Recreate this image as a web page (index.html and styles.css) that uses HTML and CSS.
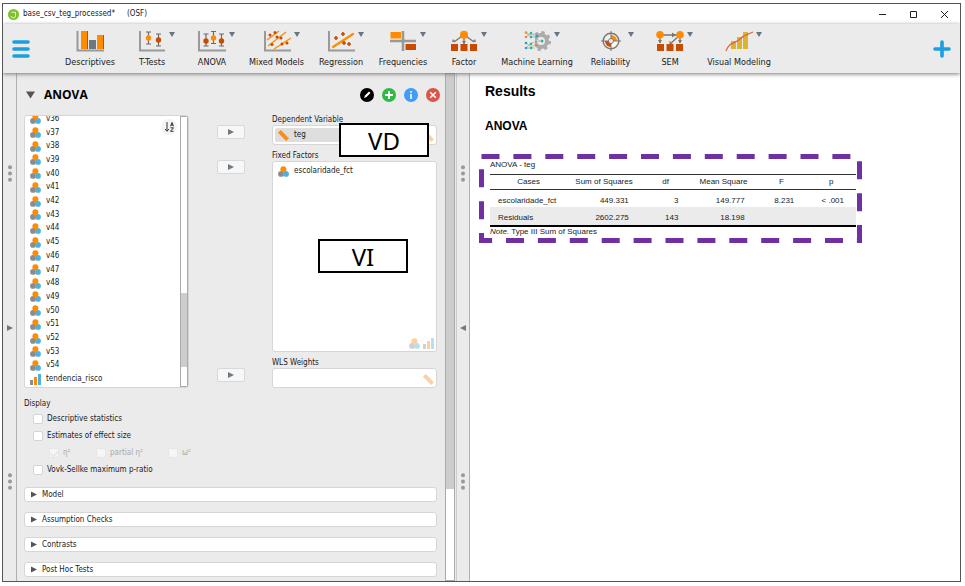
FILE: index.html
```html
<!DOCTYPE html>
<html lang="en">
<head>
<meta charset="utf-8">
<title>base_csv_teg_processed* (OSF)</title>
<link rel="stylesheet" href="styles.css">
</head>
<body>
<svg class="defs" aria-hidden="true">
  <symbol id="nominal" viewBox="0 0 11 11"><circle cx="3" cy="7.9" r="2.9" fill="#8c8c8c"/><circle cx="8" cy="7.9" r="2.9" fill="#4fb0de"/><circle cx="5.4" cy="3.2" r="3" fill="#ff8c00"/></symbol>
  <symbol id="ordinal" viewBox="0 0 11 11"><path d="M0 6h3v5H0z" fill="#8c8c8c"/><path d="M4 3h3v8H4z" fill="#ff8c00"/><path d="M8 0h3v11H8z" fill="#4fb0de"/></symbol>
  <symbol id="scale" viewBox="0 0 11 11"><path d="M0 2.8 2.8 0 11 8.200 8.200 11z" fill="#f58a1f"/><path d="M4 1.400 3 2.400M6 3.400 5 4.400M8 5.400 7 6.400M9.800 7.200 8.900 8.200" stroke="#ffc58a" stroke-width=".6"/></symbol>
  <symbol id="play" viewBox="0 0 6 6"><path d="M0 0 6 3 0 6z" fill="currentColor"/></symbol>
  <symbol id="dots" viewBox="0 0 4 17"><circle cx="2" cy="2.200" r="2"/><circle cx="2" cy="8.500" r="2"/><circle cx="2" cy="14.800" r="2"/></symbol>
</svg>
<div class="window">
  <header class="titlebar">
    <svg class="logo" viewBox="0 0 11 11"><circle cx="5.500" cy="5.500" r="5.500" fill="#7fc02f"/><path d="M3.500 3.200h4v3a2 2 0 0 1-4.500.8" stroke="#e6f5d0" fill="none"/></svg>
    <span>base_csv_teg_processed*</span><span class="osf">(OSF)</span>
    <div class="winbtns">
      <button aria-label="Minimize"><svg viewBox="0 0 9 9"><path d="M1 4.500h7"/></svg></button>
      <button aria-label="Maximize"><svg viewBox="0 0 9 9"><path d="M1.500 1.500h6v6h-6z"/></svg></button>
      <button aria-label="Close"><svg viewBox="0 0 9 9"><path d="m1 1 7 7M8 1 1 8"/></svg></button>
    </div>
  </header>
  <nav class="toolbar">
    <button class="menu" aria-label="Menu"><svg viewBox="0 0 18 18"><path d="M2 2h14M2 9h14M2 16h14"/></svg></button>
    <div class="modules">
      <button><svg class="ico" viewBox="0 0 30 22"><path d="M2.500 1v19.500H29" stroke="#999" stroke-width="2" fill="none"/><path d="M6 1h7v18H6z" fill="#ff8c00"/><path d="M14 10h7v9h-7z" fill="#6d777f"/><path d="M22 5h7v14h-7z" fill="#ff8c00"/><path d="M12 1h1v18h-1zM28 5h1v14h-1z" fill="#c84b00"/></svg>Descriptives</button>
      <button class="drop"><svg class="ico" viewBox="0 0 30 22"><path d="M3 1v19.500h25" stroke="#999" stroke-width="2" fill="none"/><path d="M9 2h5M9 14h5M11.500 2v12M19 4h5M19 16h5M21.500 4v12" stroke="#6b6b6b" stroke-width="1.200"/><circle cx="11.500" cy="8" r="2.700" fill="#ff8c00"/><circle cx="21.500" cy="10" r="2.700" fill="#c84b00"/></svg>T-Tests</button>
      <button class="drop"><svg class="ico" viewBox="0 0 30 22"><path d="M2 1v19.500h27" stroke="#999" stroke-width="2" fill="none"/><path d="M6.500 4h5M6.500 16h5M9 4v12M14 1.500h5M14 13.500h5M16.500 1.500v12M22 4h5M22 16h5M24.500 4v12" stroke="#6b6b6b" stroke-width="1.200"/><circle cx="9" cy="11" r="2.700" fill="#c84b00"/><circle cx="16.500" cy="8" r="2.700" fill="#ff8c00"/><circle cx="24.500" cy="11" r="2.700" fill="#c84b00"/></svg>ANOVA</button>
      <button class="drop"><svg class="ico" viewBox="0 0 30 22"><path d="M3 1v19.500h26" stroke="#999" stroke-width="2" fill="none"/><path d="M5 10 17 1M6 16 24 2M12 19 29 8" stroke="#ff8c00" stroke-width="1.400"/><g fill="#c84b00"><circle cx="8" cy="5" r="1.500"/><circle cx="13" cy="2.500" r="1.500"/><circle cx="10" cy="14.500" r="1.500"/><circle cx="15" cy="7" r="1.500"/><circle cx="19" cy="8" r="1.500"/><circle cx="20" cy="14" r="1.500"/><circle cx="25" cy="13" r="1.500"/></g></svg>Mixed Models</button>
      <button class="drop"><svg class="ico" viewBox="0 0 30 22"><path d="M3 1v19.500h26" stroke="#999" stroke-width="2" fill="none"/><path d="M7 17 27 4" stroke="#ff8c00" stroke-width="2.200" stroke-linecap="round"/><path d="M8 8h4M10 6v4M15 4h4M17 2v4M16 13h4M18 11v4M21 14h4M23 12v4" stroke="#c84b00" stroke-width="1.600"/></svg>Regression</button>
      <button class="drop"><svg class="ico" viewBox="0 0 30 22"><path d="M15 1v20M2 11h26" stroke="#999" stroke-width="2.600"/><path d="M2.500 2h10.500v6.500H2.500z" fill="#ff8c00"/><path d="M17.500 14h10.500v6H17.500z" fill="#c84b00"/></svg>Frequencies</button>
      <button class="drop"><svg class="ico" viewBox="0 0 30 22"><path d="M15 6v8M13 6 5 12M17 6l8 6" stroke="#777" stroke-width="1.300"/><path d="m13 11 2 3 2-3zM3 12l1-3 2.500 2.500zM27 12l-1-3-2.500 2.500z" fill="#777"/><circle cx="15" cy="4.800" r="4" fill="#ff8c00"/><path d="M2 14h7v7H2zM11.500 14h7v7h-7zM21 14h7v7h-7z" fill="#c84b00"/></svg>Factor</button>
      <button class="drop"><svg class="ico" viewBox="0 0 30 22"><circle cx="19" cy="11" r="6" fill="none" stroke="#ababab" stroke-width="4"/><circle cx="19" cy="11" r="8.500" fill="none" stroke="#ababab" stroke-width="3" stroke-dasharray="3.340 3.340"/><path d="M1 0h12v22H1z" fill="#ebebeb"/><path d="m4 3 5 2 7-2M4 7l5-4 9 8M4 3l5 4h5M4 13l5 4 6-3M4 18l5-5 9-2M4 18h9" fill="none" stroke="#87a8a0" stroke-width=".6"/><g fill="#e98a36"><circle cx="4" cy="2.500" r="1.300"/><circle cx="4" cy="7" r="1.300"/><circle cx="14" cy="15" r="1.300"/></g><g fill="#2d9bd0"><circle cx="4" cy="13" r="1.300"/><circle cx="4" cy="18" r="1.300"/><circle cx="15" cy="6" r="1.300"/></g><g fill="#35b38b"><circle cx="9" cy="3" r="1.300"/><circle cx="9" cy="7" r="1.300"/><circle cx="9" cy="14" r="1.300"/><circle cx="9" cy="18" r="1.300"/><circle cx="20" cy="11" r="1.500"/></g></svg>Machine Learning</button>
      <button class="drop"><svg class="ico" viewBox="0 0 30 22"><circle cx="15" cy="11" r="7.800" fill="#f4eee8" stroke="#777" stroke-width="1.400"/><path d="M15 11V5a6 6 0 0 1 6 6z" fill="#ff8c00"/><path d="M15 11v6a6 6 0 0 0 6-6z" fill="#fff"/><path d="M15 11v6a6 6 0 0 1-6-6z" fill="#c84b00"/><path d="M15 1v20M5 11h20" stroke="#777"/><circle cx="15" cy="11" r="2.500" fill="#f4eee8" stroke="#777"/></svg>Reliability</button>
      <button class="drop"><svg class="ico" viewBox="0 0 30 22"><path d="M5 5h18M5 6v7M25 5 15 14M25 6v7" stroke="#777" stroke-width="1.300"/><path d="m17 2.500 4 2.500-4 2.500zM3 10h4l-2 3.500zM23 10h4l-2 3.500zM14 11l1 3 3-1z" fill="#777"/><circle cx="5" cy="4.800" r="3.800" fill="#ff8c00"/><circle cx="25" cy="4.800" r="3.800" fill="#ff8c00"/><path d="M2 14h7v7H2zM11.500 14h7v7h-7zM21 14h7v7h-7z" fill="#c84b00"/></svg>SEM</button>
      <button class="drop"><svg class="ico" viewBox="0 0 30 22"><path d="M7 11h5v8H7zM13 7h5v12h-5zM19 2h5v17h-5z" fill="#dcb52f"/><path d="M2 21C6 11 11 14 16 9S23 5 29 2" fill="none" stroke="#e3603a" stroke-width="1.200"/></svg>Visual Modeling</button>
    </div>
    <button class="add" aria-label="Add module"><svg viewBox="0 0 18 18"><path d="M2 9h14M9 2v14"/></svg></button>
  </nav>
  <main class="work">
    <aside class="gutter"><svg class="dots"><use href="#dots"/></svg><svg class="tri"><use href="#play"/></svg><svg class="dots"><use href="#dots"/></svg></aside>
    <section class="panel">
      <header class="phead">
        <svg class="fold" viewBox="0 0 10 8"><path d="M0 0h10L5 8z" fill="#555"/></svg>
        <h1>ANOVA</h1>
        <div class="acts">
          <button aria-label="Edit title"><svg viewBox="0 0 14 14"><circle cx="7" cy="7" r="7"/><path d="m4 10 1-2.500L9 3.500 10.500 5l-4 4z" fill="#fff"/></svg></button>
          <button aria-label="Duplicate"><svg viewBox="0 0 14 14"><circle cx="7" cy="7" r="7" fill="#2dbb43"/><path d="M3 7h8M7 3v8" stroke="#fff" stroke-width="2"/></svg></button>
          <button aria-label="Information"><svg viewBox="0 0 14 14"><circle cx="7" cy="7" r="7" fill="#419bf9"/><path d="M7 6v5M7 3v1.800" stroke="#fff" stroke-width="1.600"/></svg></button>
          <button aria-label="Remove"><svg viewBox="0 0 14 14"><circle cx="7" cy="7" r="7" fill="#dc5549"/><path d="m4.200 4.200 5.600 5.600M9.800 4.200 4.200 9.800" stroke="#fff" stroke-width="1.600"/></svg></button>
        </div>
      </header>
      <div class="assign">
        <div class="source">
          <ul>
            <li><svg><use href="#nominal"/></svg>v36</li><li><svg><use href="#nominal"/></svg>v37</li><li><svg><use href="#nominal"/></svg>v38</li><li><svg><use href="#nominal"/></svg>v39</li><li><svg><use href="#nominal"/></svg>v40</li><li><svg><use href="#nominal"/></svg>v41</li><li><svg><use href="#nominal"/></svg>v42</li><li><svg><use href="#nominal"/></svg>v43</li><li><svg><use href="#nominal"/></svg>v44</li><li><svg><use href="#nominal"/></svg>v45</li><li><svg><use href="#nominal"/></svg>v46</li><li><svg><use href="#nominal"/></svg>v47</li><li><svg><use href="#nominal"/></svg>v48</li><li><svg><use href="#nominal"/></svg>v49</li><li><svg><use href="#nominal"/></svg>v50</li><li><svg><use href="#nominal"/></svg>v51</li><li><svg><use href="#nominal"/></svg>v52</li><li><svg><use href="#nominal"/></svg>v53</li><li><svg><use href="#nominal"/></svg>v54</li><li><svg><use href="#ordinal"/></svg>tendencia_risco</li>
          </ul>
          <button class="sort" aria-label="Sort"><svg viewBox="0 0 9 10"><path d="M2 0v9M0 7l2 2.300L4 7M5.500 4.300 7 .5l1.500 3.800M6 3h2M5.500 5.800h3L5.500 9.300h3" fill="none" stroke="#333" stroke-width="1"/></svg></button>
          <div class="track"><div class="thumb"></div></div>
        </div>
        <div class="movers">
          <button aria-label="Move to Dependent Variable"><svg><use href="#play"/></svg></button>
          <button aria-label="Move to Fixed Factors"><svg><use href="#play"/></svg></button>
          <button aria-label="Move to WLS Weights"><svg><use href="#play"/></svg></button>
        </div>
        <div class="targets">
          <h2>Dependent Variable</h2>
          <div class="box"><div class="chip sel"><svg><use href="#scale"/></svg>teg</div><div class="hint"><svg><use href="#scale"/></svg></div></div>
          <h2>Fixed Factors</h2>
          <div class="box tall"><div class="chip"><svg><use href="#nominal"/></svg>escolaridade_fct</div><div class="hint"><svg><use href="#nominal"/></svg><svg><use href="#ordinal"/></svg></div></div>
          <h2>WLS Weights</h2>
          <div class="box last"><div class="hint"><svg><use href="#scale"/></svg></div></div>
          <div class="callout vd">VD</div>
          <div class="callout vi">VI</div>
        </div>
      </div>
      <fieldset>
        <legend>Display</legend>
        <label><input type="checkbox">Descriptive statistics</label>
        <label><input type="checkbox">Estimates of effect size</label>
        <div class="sub">
          <label><input type="checkbox" checked disabled>η²</label>
          <label><input type="checkbox" disabled>partial η²</label>
          <label><input type="checkbox" disabled>ω²</label>
        </div>
        <label><input type="checkbox">Vovk-Sellke maximum p-ratio</label>
      </fieldset>
      <div class="sections">
        <button><svg><use href="#play"/></svg>Model</button>
        <button><svg><use href="#play"/></svg>Assumption Checks</button>
        <button><svg><use href="#play"/></svg>Contrasts</button>
        <button><svg><use href="#play"/></svg>Post Hoc Tests</button>
      </div>
    </section>
    <div class="pscroll"><div class="pthumb"></div></div>
    <aside class="gutter right"><svg class="dots"><use href="#dots"/></svg><svg class="tri back"><use href="#play"/></svg><svg class="dots"><use href="#dots"/></svg></aside>
    <section class="results">
      <h1>Results</h1>
      <h2>ANOVA</h2>
      <div class="marked">
        <table>
          <caption>ANOVA - teg</caption>
          <colgroup><col class="c1"><col class="c2"><col class="c3"><col class="c4"><col class="c3"><col class="c3"></colgroup>
          <thead><tr><th>Cases</th><th>Sum of Squares</th><th>df</th><th>Mean Square</th><th>F</th><th>p</th></tr></thead>
          <tbody>
            <tr><td>escolaridade_fct</td><td>449.331</td><td>3</td><td>149.777</td><td>8.231</td><td>&lt; .001</td></tr>
            <tr><td>Residuals</td><td>2602.275</td><td>143</td><td>18.198</td><td></td><td></td></tr>
          </tbody>
        </table>
        <p><i>Note.</i> Type III Sum of Squares</p>
        <svg class="frame" viewBox="0 0 383 89"><path d="M2.500 2.500h378v84H2.500z"/></svg>
      </div>
    </section>
  </main>
</div>
</body>
</html>
```
FILE: styles.css
```css
* { box-sizing: border-box; }
body {
  margin: 0;
  padding: 3px 4px 4px 2px;
  height: 100vh;
  background: #fff;
  color: #1a1a1a;
  font: 8px/10px "DejaVu Sans Condensed", "DejaVu Sans", sans-serif;
}
h1, h2, p, ul { margin: 0; padding: 0; }
button { border: 0; padding: 0; background: none; font: inherit; color: inherit; }
svg { display: block; flex: none; }
.defs { position: absolute; width: 0; height: 0; }
.window { height: 100%; display: flex; flex-direction: column; border: 1px solid #555; overflow: hidden; }

.titlebar { display: flex; align-items: center; height: 20px; padding-left: 5px; flex: none; }
.logo { width: 11px; height: 11px; margin-right: 4px; }
.osf { margin-left: 12px; }
.winbtns { display: flex; gap: 22px; margin-left: auto; padding-right: 11px; }
.winbtns svg { width: 9px; height: 9px; fill: none; stroke: #222; }

.toolbar { position: relative; z-index: 1; display: flex; align-items: center; height: 49px; flex: none; padding: 0 9px; background: #ebebeb; box-shadow: 0 1px 4px #777; }
.menu svg, .add svg { width: 18px; height: 18px; stroke: #1a9fe0; stroke-width: 3.6; stroke-linecap: round; }
.modules { display: grid; grid-template-columns: 62px 62px 58px 71px 58px 66px 56px 90px 57px 62px 76px; margin: 0 auto 0 29px; font-size: 9px; line-height: 12px; }
.modules button { position: relative; display: flex; flex-direction: column; align-items: center; gap: 4px; white-space: nowrap; }
.ico { width: 30px; height: 22px; }
.drop::after { content: ""; position: absolute; top: 2px; left: calc(50% + 17px); border: solid transparent; border-width: 5px 3px 0; border-top-color: #687480; }

.work { display: flex; flex: 1; min-height: 0; background: #ebebeb; }
.gutter { width: 14px; flex: none; display: flex; flex-direction: column; align-items: center; justify-content: space-between; padding: 92px 0 91px; background: #ebebeb; border-right: 1px solid #b0b0b0; }
.dots { width: 4px; height: 17px; fill: #999; }
.tri { width: 6px; height: 6px; color: #777; }
.back { transform: scaleX(-1); }
.gutter.right { border-left: 1px solid #ccc; }

.panel { width: 428px; flex: none; padding: 14px 8px 0 7px; background: #ebebeb; overflow: hidden; }
.phead { display: flex; align-items: center; height: 16px; padding: 0 0 0 2px; }
.fold { width: 9px; height: 8px; }
.phead h1 { margin-left: 9px; font: bold 12px/16px "Open Sans", sans-serif; color: #000; }
.acts { display: flex; gap: 8px; margin-left: auto; margin-right: -3px; }
.acts svg { width: 14px; height: 14px; }

.assign { display: grid; grid-template-columns: 165px 83px 1fr; height: 273px; margin-top: 12px; }
.source { position: relative; display: flex; border: 1px solid #d6d6d6; border-radius: 3px; background: #fff; overflow: hidden; }
.source ul { display: grid; grid-auto-rows: 1fr; flex: 1; margin: -4px 0 1px; list-style: none; }
.source li { display: flex; align-items: center; gap: 5px; padding-left: 5px; min-height: 0; }
.source li svg, .chip svg, .hint svg { width: 11px; height: 11px; }
.sort { position: absolute; right: 11px; top: 3px; width: 16px; height: 16px; border-radius: 50%; background: #f4f4f4; display: grid; place-items: center; }
.sort svg { width: 9px; height: 10px; }
.track { width: 8px; border: 1px solid #aaa; padding-top: 176px; }
.thumb { height: 74px; background: #cdcdcd; }
.movers { display: flex; flex-direction: column; align-items: center; gap: 21px; padding: 10px 0 6px; }
.movers button { width: 28px; height: 14px; border: 1px solid #d8d8d8; border-radius: 2px; background: #f6f7f9; display: grid; place-items: center; }
.movers svg { width: 6px; height: 6px; color: #777; }
.movers button:last-child { margin-top: auto; }
.targets { position: relative; display: flex; flex-direction: column; }
.targets h2 { font: inherit; }
.box { display: flex; justify-content: space-between; height: 20px; flex: none; margin-bottom: 6px; padding: 2px; border: 1px solid #d6d6d6; border-radius: 3px; background: #fff; }
.box.last { margin-bottom: 0; }
.box.tall { flex: 1; }
.chip { display: flex; align-items: center; gap: 5px; height: 14px; padding-left: 3px; flex: 1; }
.sel { background: #dedede; border-radius: 2px; }
.hint { display: flex; gap: 3px; align-self: flex-end; margin-left: auto; opacity: .4; }
.callout { position: absolute; width: 90px; height: 34px; border: 2px solid #000; background: #fff; color: #000; font: 24px/32px "Noto Sans", sans-serif; text-align: center; }
.vd { left: 67px; top: 8px; }
.vi { left: 46px; top: 124px; }

fieldset { border: 0; margin: 11px 0 0; padding: 0; }
legend { padding: 0; margin-bottom: 1px; }
fieldset label { display: flex; align-items: center; height: 17px; padding-left: 9px; gap: 4px; }
input { appearance: none; width: 10px; height: 10px; margin: 0; border: 1px solid #d4d4d4; border-radius: 2px; background: #fff; }
input:disabled { border-color: #e6e6e6; background: #f6f6f6; }
input:checked { display: grid; place-items: center; }
input:checked::after { content: ""; width: 6px; height: 3px; border: solid #ddd; border-width: 0 0 1px 1px; transform: rotate(-45deg); }
.sub { display: grid; grid-template-columns: 47px 72px 1fr; padding-left: 16px; color: #aaa; }
.sections { display: grid; gap: 10px; margin-top: 9px; }
.sections button { display: flex; align-items: center; gap: 5px; height: 15px; padding-left: 6px; border: 1px solid #d6d6d6; border-radius: 3px; background: #fff; }
.sections svg { width: 6px; height: 7px; color: #555; }
.sections svg, .fold { overflow: visible; }

.pscroll { width: 10px; flex: none; border: 1px solid #aaa; background: #fff; margin-right: 1px; }
.pthumb { height: 82%; background: #cdcdcd; }

.results { flex: 1; background: #fff; padding: 9px 0 0 9px; font-family: "Liberation Sans", Arial, sans-serif; }
.results h1 { padding-left: 6px; font-size: 14px; line-height: 18px; color: #000; }
.results h2 { padding-left: 6px; margin-top: 19px; font-size: 12px; line-height: 14px; color: #000; }
.marked { position: relative; width: 383px; height: 89px; margin-top: 21px; padding: 5px 6px 0 11px; font-size: 8px; line-height: 10px; color: #222; }
.frame { position: absolute; inset: 0; width: 383px; height: 89px; fill: none; stroke: #7030a0; stroke-width: 5; stroke-dasharray: 18 13.900; }
table { width: 100%; table-layout: fixed; border-collapse: collapse; border-bottom: 2px solid #000; }
caption { text-align: left; height: 15px; padding-top: 1px; }
.c1 { width: 21%; } .c2 { width: 20%; } .c3 { width: 13.500%; } .c4 { width: 18%; }
th { font-weight: normal; padding: 0; height: 15px; border: solid #333; border-width: 1px 0; white-space: nowrap; }
td { text-align: right; padding: 0 12px 0 0; height: 17px; }
td:first-child { text-align: left; padding: 0 0 0 8px; white-space: nowrap; }
tbody tr:first-child td { padding-top: 5px; height: 17px; }
tbody tr:last-child { background: #ebebeb; }
tbody tr:last-child td { height: 19px; padding-top: 4px; }
```
